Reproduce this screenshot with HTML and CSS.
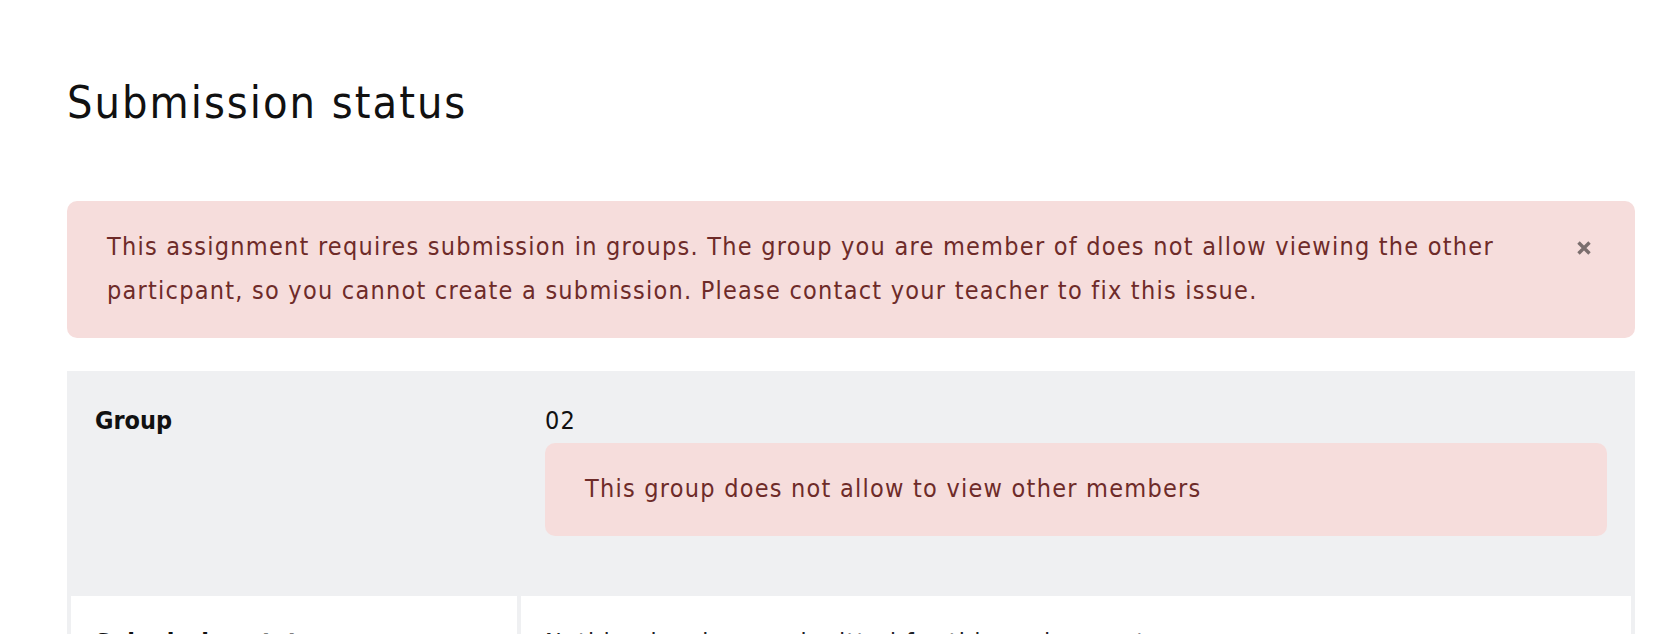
FILE: index.html
```html
<!DOCTYPE html>
<html lang="en">
<head>
<meta charset="utf-8">
<title>Submission status</title>
<link rel="stylesheet" href="styles.css">
</head>
<body>
<div class="page">
  <h3 class="page-title">Submission status</h3>
  <div class="alert alert-danger">
    <p class="alert-text">This assignment requires submission in groups. The group you are member of does not allow viewing the other particpant, so you cannot create a submission. Please contact your teacher to fix this issue.</p>
    <button class="close" type="button" aria-label="Close">
      <svg viewBox="0 0 16 16" width="16" height="16"><path d="M2.5 2.5 L13.5 13.5 M13.5 2.5 L2.5 13.5" stroke="currentColor" stroke-width="3.4" stroke-linecap="butt"/></svg>
    </button>
  </div>
  <div class="status-table">
    <div class="cell cell-head row-odd">Group</div>
    <div class="cell row-odd">
      <div class="group-name">02</div>
      <div class="alert alert-danger alert-inline">This group does not allow to view other members</div>
    </div>
    <div class="cell cell-head row-even">Submission status</div>
    <div class="cell row-even">Nothing has been submitted for this assignment</div>
  </div>
</div>
</body>
</html>
```
FILE: styles.css
```css
* { box-sizing: border-box; }
html, body { margin: 0; padding: 0; background: #fff; }
body {
  font-family: "DejaVu Sans Condensed", "DejaVu Sans", sans-serif;
  font-size: 25px;
  line-height: 44.5px;
  letter-spacing: 1.24px;
  color: #1d2125;
}
.page {
  width: 1568px;
  margin-left: 67px;
  padding-top: 77px;
}
.page-title {
  margin: 0 0 70px;
  font-size: 44.7px;
  line-height: 1.2;
  font-weight: 400;
  letter-spacing: 2px;
  color: #111;
}
.alert {
  position: relative;
  padding: 24px 40px;
  border-radius: 10px;
}
.alert-danger {
  background: #f6dddc;
  color: #6e2b29;
}
.alert-text { margin: 0; padding-right: 70px; }
.close {
  position: absolute;
  top: 39px;
  right: 43px;
  width: 16px;
  height: 16px;
  padding: 0;
  border: 0;
  background: transparent;
  color: rgba(0,0,0,0.5);
  display: flex;
}
.status-table {
  margin-top: 33px;
  background: #eff0f2;
  display: grid;
  grid-template-columns: 446px 1fr;
  column-gap: 4px;
  padding: 0 4px;
}
.cell { padding: 28px 24px 24px; }
.cell-head { font-weight: 700; letter-spacing: 0; color: #111; }
.row-odd { padding-bottom: 28px; }
.row-even { background: #fff; padding-top: 25px; }
.group-name { color: #111; }
.alert-inline { margin: 0 0 32px; }
```
